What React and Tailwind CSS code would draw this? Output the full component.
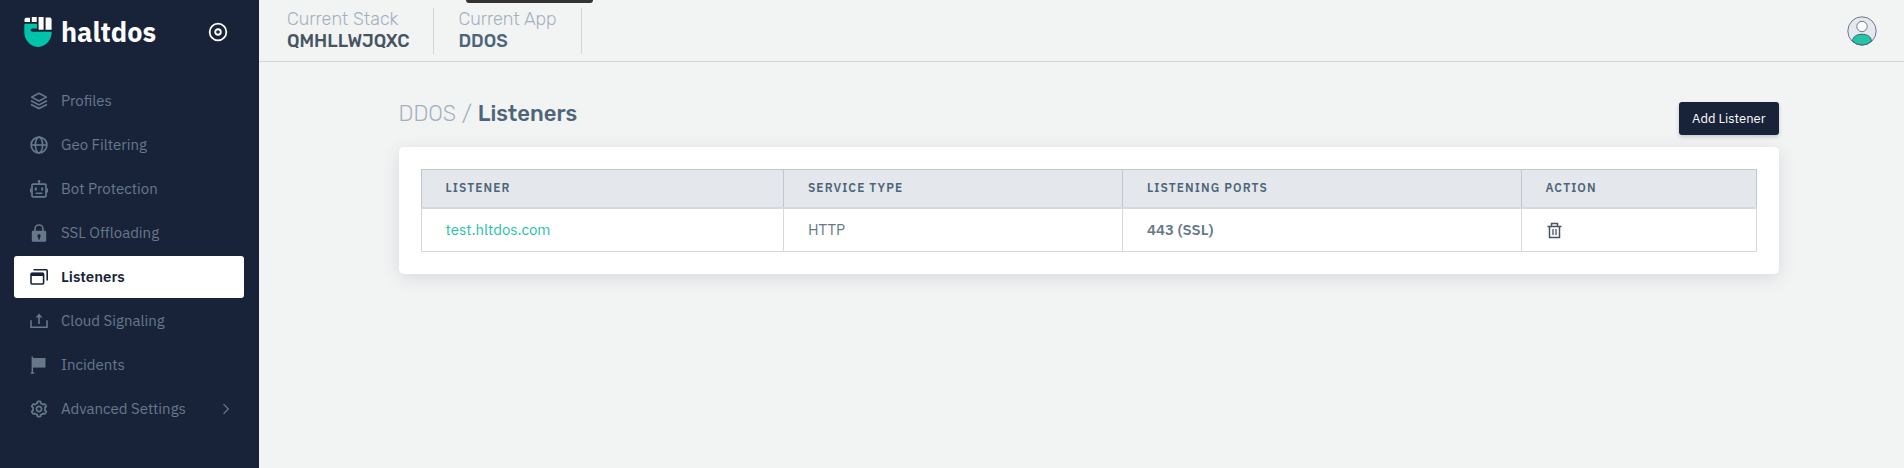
import React from "react";
import { BiCog } from "react-icons/bi";

const plex = "font-['IBM_Plex_Sans',Roboto,sans-serif]";
const rubik = "font-['Rubik',Roboto,sans-serif]";

function Svg({ children, className = "size-[18px]" }) {
  return (
    <svg viewBox="0 0 18 18" className={className} fill="none" stroke="currentColor" aria-hidden="true">
      {children}
    </svg>
  );
}

function StackIcon() {
  return (
    <Svg>
      <path d="M9 1.2 16.4 5.1 9 9 1.600 5.100Z" strokeWidth="1.6" strokeLinejoin="round" />
      <path d="M1 8.800 9 12.900l8-4.100M1 12.400 9 16.600l8-4.200" strokeWidth="1.7" />
    </Svg>
  );
}

function GlobeIcon() {
  return (
    <Svg>
      <circle cx="9" cy="9" r="7.900" strokeWidth="1.700" />
      <ellipse cx="9" cy="9" rx="3.600" ry="7.900" strokeWidth="1.600" />
      <path d="M1.400 9h15.200" strokeWidth="1.600" />
    </Svg>
  );
}

function RobotIcon() {
  return (
    <Svg>
      <rect x="2" y="4.200" width="14" height="12.600" rx="1" strokeWidth="1.700" />
      <path d="M9 .4v3.800M.7 8.600v4M17.300 8.600v4" strokeWidth="1.500" />
      <circle cx="9" cy="1.300" r="1.200" fill="currentColor" stroke="none" />
      <path d="M5.800 7.600v2.800M12.200 7.600v2.800" strokeWidth="2" />
      <path d="M5.600 13.300h6.800" strokeWidth="1.500" />
    </Svg>
  );
}

function LockIcon() {
  return (
    <Svg>
      <path d="M5 7.600V5a4 4 0 0 1 8 0v2.600" strokeWidth="1.600" />
      <path
        fillRule="evenodd"
        fill="currentColor"
        stroke="none"
        d="M3 6.800h12a1.200 1.200 0 0 1 1.200 1.200v8.600A1.200 1.200 0 0 1 15 17.800H3a1.200 1.200 0 0 1-1.200-1.200V8A1.200 1.200 0 0 1 3 6.800ZM9 10.300a1.700 1.700 0 0 0-.8 3.200V15.600h1.600v-2.100A1.700 1.700 0 0 0 9 10.300Z"
      />
    </Svg>
  );
}

function WindowsIcon() {
  return (
    <Svg>
      <path d="M3.500 1.800h12.700a1 1 0 0 1 1 1v9.700" strokeWidth="1.600" />
      <rect x="1" y="5.200" width="12.600" height="10.800" rx="1" strokeWidth="1.600" />
      <path d="M1 4.800h12.600v3.200H1z" fill="currentColor" stroke="none" />
    </Svg>
  );
}

function UploadIcon() {
  return (
    <Svg>
      <path d="M1 8.200v7h16v-7" strokeWidth="1.600" />
      <path d="M9 12V4" strokeWidth="1.600" />
      <path d="M9 1.400 12.400 5.400H5.600Z" fill="currentColor" stroke="none" />
    </Svg>
  );
}

function FlagIcon() {
  return (
    <Svg>
      <path d="M2.300.4v17M.8 17h3.400" strokeWidth="1.400" />
      <path d="M2.300 2h13.200v9.600H2.300z" fill="currentColor" stroke="none" />
    </Svg>
  );
}

function CogIcon() {
  return <BiCog viewBox="1.500 1.500 21 21" className="size-[18px]" aria-hidden="true" />;
}

function TrashIcon() {
  return (
    <svg viewBox="0 0 16 18" className="h-[18px] w-4" fill="none" stroke="currentColor" aria-hidden="true">
      <path d="M1.500 5.500h14M5.500 5.500v-3h6v3" strokeWidth="1.500" />
      <path d="M3.500 5.500v11h10v-11" strokeWidth="1.500" />
      <path d="M7 8v6M10 8v6" strokeWidth="1.300" />
    </svg>
  );
}

function Logo() {
  return (
    <svg viewBox="0 0 28 30" className="h-[30px] w-7" aria-hidden="true">
      <g fill="#fff">
        <path d="M2 .8H6V5H.5V2.500Q.7 1 2 .8Z" />
        <path d="M7.800 0h4.900v5H7.800z" />
        <path d="M14.600 0h5v12.700h-5z" />
        <path d="M21.600.6h4.600q1.300.3 1.400 2v10.100h-6z" />
      </g>
      <path
        fill="#00c4aa"
        d="M.3 8Q.3 6.700 1.600 6.700H13V11.400H8.500Q6.500 11.600 6.300 13.300Q7.200 14.800 9.500 14.800H27.700V15.600C27.700 22 22.500 30 14 30C5.500 30 .3 22 .3 15.600Z"
      />
    </svg>
  );
}

function Avatar() {
  return (
    <svg viewBox="0 0 30 30" className="size-[30px]" aria-hidden="true">
      <circle cx="15" cy="15" r="14.200" fill="#e5e8ed" stroke="#71788e" />
      <circle cx="15" cy="10.500" r="5.200" fill="#fff" stroke="#71788e" />
      <path d="M5.500 25.200C6 20.500 9.500 18.300 15 18.300s9 2.200 9.500 6.900Q20.500 29 15 29T5.500 25.200Z" fill="#27c3a8" stroke="#39677a" />
    </svg>
  );
}

const nav = [
  { label: "Profiles", Icon: StackIcon },
  { label: "Geo Filtering", Icon: GlobeIcon },
  { label: "Bot Protection", Icon: RobotIcon },
  { label: "SSL Offloading", Icon: LockIcon },
  { label: "Listeners", Icon: WindowsIcon, active: true },
  { label: "Cloud Signaling", Icon: UploadIcon },
  { label: "Incidents", Icon: FlagIcon },
  { label: "Advanced Settings", Icon: CogIcon, more: true },
];

function Sidebar() {
  return (
    <aside className="w-[259px] shrink-0 bg-[#18233a] pr-[15px] pl-[14px]">
      <div className="flex h-16 items-center pr-4 pl-[10px]">
        <a href="#" className="flex items-center gap-[9px] text-white">
          <Logo />
          <span className="text-[27px] leading-8 font-bold">haltdos</span>
        </a>
        <button type="button" aria-label="Toggle menu" className="ml-auto text-white">
          <Svg className="size-5">
            <circle cx="9" cy="9" r="7.500" strokeWidth="1.600" />
            <circle cx="9" cy="9" r="2.500" strokeWidth="1.700" />
          </Svg>
        </button>
      </div>
      <nav className="flex flex-col gap-[2px] pt-4">
        {nav.map(({ label, Icon, active, more }) => (
          <a
            key={label}
            href="#"
            className={
              "flex h-[42px] items-center gap-[13px] rounded-[3px] pr-[14px] pl-4 text-[15px] " +
              (active ? "bg-white font-semibold text-[#18233a]" : "text-[#67788a]")
            }
          >
            <Icon />
            <span>{label}</span>
            {more && (
              <svg viewBox="0 0 8 12" className="ml-auto h-3 w-2" fill="none" stroke="currentColor" aria-hidden="true">
                <path d="M1.500 1.200 6.300 6 1.500 10.800" strokeWidth="1.200" />
              </svg>
            )}
          </a>
        ))}
      </nav>
    </aside>
  );
}

function Current({ label, value, className }) {
  return (
    <div className={"border-r border-[#d3d7da] pr-6 pb-[2px] text-lg leading-[22px] " + className}>
      <div className="font-light text-[#a5b0bd]">{label}</div>
      <div className="font-medium">{value}</div>
    </div>
  );
}

export default function App() {
  return (
    <div className={"flex min-h-screen bg-[#f2f4f4] " + plex}>
      <Sidebar />
      <div className="flex min-w-0 grow flex-col">
        <header className={"relative flex h-[62px] items-center border-b border-[#d3d7da] pr-[27px] pl-7 " + rubik}>
          <div className="absolute top-0 left-[207px] h-[3px] w-[127px] rounded-b bg-[#333]" />
          <div className="flex gap-6">
            <Current label="Current Stack" value="QMHLLWJQXC" className="text-[#475563]" />
            <Current label="Current App" value="DDOS" className="text-[#4e6579]" />
          </div>
          <button type="button" aria-label="Account" className="ml-auto">
            <Avatar />
          </button>
        </header>
        <main className="pt-10 pl-[14px]">
          <div className="mx-auto max-w-[1380px]">
            <div className="flex h-[33px] items-start justify-between">
              <h1 className={"text-[22px] leading-6 font-medium text-[#4e6579] " + rubik}>
                <span className="font-light text-[#a5b0bd]">DDOS / </span>
                Listeners
              </h1>
              <button
                type="button"
                className="h-[33px] rounded-[3px] bg-[#18233a] px-[13px] text-[13px] text-white shadow-[0_2px_4px_rgba(25,34,58,0.2)]"
              >
                Add Listener
              </button>
            </div>
            <section className="mt-3 rounded-[5px] bg-white p-[22px] shadow-[0_4px_18px_rgba(25,34,58,0.12)]">
              <table className="w-full table-fixed border-collapse text-left text-[15px] text-[#66788a]">
                <colgroup>
                  <col className="w-[27.15%]" />
                  <col className="w-[25.4%]" />
                  <col className="w-[29.85%]" />
                  <col className="w-[17.6%]" />
                </colgroup>
                <thead>
                  <tr className="h-[38px] bg-[#e4e8ed] text-xs tracking-[1.1px] text-[#4e6579] uppercase">
                    {["Listener", "Service Type", "Listening Ports", "Action"].map((h) => (
                      <th key={h} scope="col" className="border border-b-2 border-[#c0c7d0] border-b-[#d5d9de] px-6 font-semibold">
                        {h}
                      </th>
                    ))}
                  </tr>
                </thead>
                <tbody>
                  <tr className="h-11">
                    <td className="border border-[#d5d9de] px-6">
                      <a href="#" className="text-[#27c3a8]">test.hltdos.com</a>
                    </td>
                    <td className="border border-[#d5d9de] px-6">HTTP</td>
                    <td className="border border-[#d5d9de] px-6 font-semibold">443 (SSL)</td>
                    <td className="border border-[#d5d9de] px-6">
                      <button type="button" aria-label="Delete listener" className="block text-[#475563]">
                        <TrashIcon />
                      </button>
                    </td>
                  </tr>
                </tbody>
              </table>
            </section>
          </div>
        </main>
      </div>
    </div>
  );
}
